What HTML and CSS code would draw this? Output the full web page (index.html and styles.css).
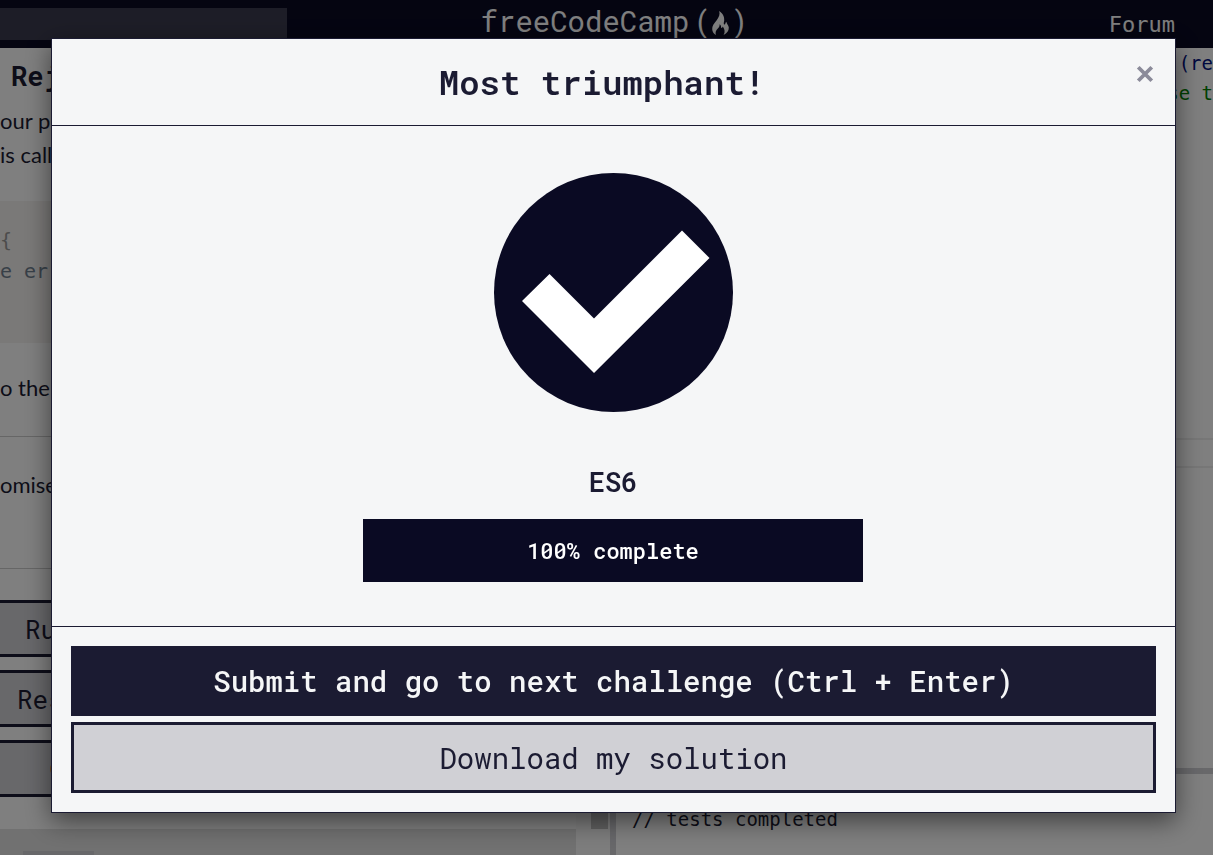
FILE: index.html
```html
<!DOCTYPE html>
<html lang="en">
<head>
<meta charset="utf-8">
<title>freeCodeCamp - ES6</title>
<link rel="stylesheet" href="styles.css">
</head>
<body>
<div class="app">
  <header class="topbar">
    <input class="search" type="text" aria-label="Search">
    <div class="logo">
      <span>freeCodeCamp</span><span class="paren open">(</span>
      <svg class="flame" viewBox="0 0 17 24" aria-hidden="true"><path d="M7.2 0C8.2 3.500 7 6 4.500 9.500 2 12.500 0 15 .2 18.200 .3 20.800 1.800 22.800 4 24 3 21.500 4 19.500 5.600 17.800 7 16.200 7.800 15 7.600 13.200 9 14.200 9.300 15.800 9 17 10.100 16.800 10.600 16.300 10.800 15.600 12.600 18 13.400 21 11.600 24 15 22.300 17 19.500 16.800 16.600 16.600 14.400 14.800 13 14.300 10.800 13.200 11.800 13.400 13.500 12.700 13.600 11.300 13.800 11.800 11.500 12.200 9.500 12.600 6 10.800 2.200 7.200 0Z"/></svg>
      <span class="paren">)</span>
    </div>
    <a class="forum" href="#">Forum</a>
  </header>
  <div class="workspace">
    <section class="lesson">
      <h1 class="lesson-title">Reject</h1>
      <p class="text">our promise<br>is called</p>
      <pre class="code"><span class="brace">{</span>
e error</pre>
      <p class="text task">o the</p>
      <p class="text hint">omise</p>
      <div class="tools">
        <button class="tool run">Run</button>
        <button class="tool reset">Reset</button>
        <button class="tool help" aria-label="Get help"><span class="dot"></span></button>
      </div>
      <div class="tests"><div class="test"></div></div>
    </section>
    <div class="track"><div class="thumb"></div></div>
    <section class="editor">
      <pre class="source"><span class="navy">((re</span>
<span class="green">se t</span></pre>
      <div class="band"></div>
      <pre class="console">// tests completed</pre>
    </section>
  </div>
</div>
<div class="backdrop">
  <div class="modal" role="dialog" aria-modal="true" aria-labelledby="modal-title">
    <div class="modal-header">
      <h2 class="modal-title" id="modal-title">Most triumphant!</h2>
      <button class="close" aria-label="Close"><svg viewBox="0 0 16 16"><path d="M2 2 14 14M14 2 2 14"/></svg></button>
    </div>
    <div class="modal-body">
      <svg class="check" viewBox="0 0 239 239" aria-hidden="true"><circle cx="119.500" cy="119.500" r="119.500"/><path d="M28 128 55.500 101 100 145.500 188 57.500 215.500 85 100 200Z"/></svg>
      <h3 class="block-name">ES6</h3>
      <div class="progress">100% complete</div>
    </div>
    <div class="modal-footer">
      <button class="btn primary">Submit and go to next challenge (Ctrl + Enter)</button>
      <button class="btn secondary">Download my solution</button>
    </div>
  </div>
</div>
</body>
</html>
```

FILE: styles.css
```css
* { box-sizing: border-box; }
body {
  margin: 0;
  overflow: hidden;
  color: #1b1b32;
  font-family: Lato, sans-serif;
}
h1, h2, h3, p, pre { margin: 0; }
button { font-family: "Roboto Mono", "Liberation Mono", monospace; color: #1b1b32; }

.app { height: 100vh; display: flex; flex-direction: column; background: #fff; }
.topbar {
  flex: none;
  height: 48px;
  display: grid;
  grid-template-columns: 1fr auto 1fr;
  align-items: center;
  padding-right: 38px;
  background: #0a0a23;
  font-family: "Roboto Mono", "Liberation Mono", monospace;
  color: #fff;
}
.search { width: 287px; height: 32px; border: 0; background: #3b3b4f; }
.logo {
  display: flex;
  align-items: center;
  height: 48px;
  padding: 0 0 6px 54px;
  font-size: 29px;
  line-height: 40px;
}
.paren { width: 18px; text-align: center; }
.open { margin-left: 4px; }
.flame { width: 17px; height: 24px; margin: 4px 1px 0; fill: #fff; }
.forum {
  justify-self: end;
  color: #fff;
  text-decoration: none;
  font-family: "DejaVu Sans Mono", monospace;
  font-size: 22px;
}

.workspace { flex: 1; min-height: 0; display: flex; }
.lesson { width: 576px; flex: none; overflow: hidden; display: flex; flex-direction: column; }
.lesson > * { flex-shrink: 0; }
.lesson-title {
  padding: 11px 0 11px 11px;
  font: bold 27px/34px "Roboto Mono", "Liberation Mono", monospace;
}
.text { font-size: 22px; line-height: 34px; }
.code {
  height: 142px;
  margin-top: 29px;
  padding-top: 24px;
  background: #f5f2f0;
  color: #708090;
  font: 20px/31px "DejaVu Sans Mono", monospace;
}
.brace { color: #999; }
.task { padding: 28px 0 31px; border-bottom: 1px solid #ccc; }
.hint { padding: 31px 0 66px; border-bottom: 1px solid #ccc; }
.tools { display: grid; gap: 13px; padding-top: 31px; }
.tool {
  height: 57px;
  border: 3px solid #1b1b32;
  border-left: 0;
  background: #d0d0d5;
  text-align: left;
  font-size: 26px;
}
.run { padding-left: 25px; }
.reset { padding-left: 17px; }
.help { padding-left: 50px; }
.dot { display: block; width: 18px; height: 18px; border-radius: 50%; background: #f1a03c; }
.tests { flex-grow: 1; margin-top: 32px; padding: 22px 0 0 23px; background: #e2e2e2; }
.test { width: 71px; height: 10px; background: #d0d0d5; }
.track { width: 34px; flex: none; display: flex; padding-left: 15px; background: #fafafa; }
.thumb { width: 17px; height: 781px; background: #c1c1c1; }
.editor { flex: 1; min-width: 0; display: flex; flex-direction: column; border-left: 6px solid #d0d0d5; }
.source {
  flex: none;
  height: 390px;
  text-align: right;
  font: 19px/30px "DejaVu Sans Mono", monospace;
}
.navy { color: #001080; }
.green { color: #008000; }
.band { flex: none; height: 30px; border: solid #eee; border-width: 2px 0; }
.console {
  flex: 1;
  margin-top: 300px;
  border-top: 6px solid #d0d0d5;
  padding: 31px 16px 0;
  font: 19px/28px "DejaVu Sans Mono", monospace;
}

.backdrop {
  position: fixed;
  inset: 0;
  padding: 38px 37px 0 51px;
  background: rgba(0, 0, 0, 0.5);
}
.modal {
  border: 1px solid #1b1b32;
  background: #f5f6f7;
  box-shadow: 0 8px 24px rgba(0, 0, 0, 0.5);
}
.modal-header {
  display: flex;
  align-items: flex-start;
  padding: 19px;
  border-bottom: 1px solid #1b1b32;
}
.modal-title {
  flex: 1;
  text-align: center;
  font: 600 34px/48px "Roboto Mono", "Liberation Mono", monospace;
}
.close { width: 23px; height: 32px; padding: 0 2px 0 3px; border: 0; background: none; }
.close svg { display: block; width: 18px; height: 18px; margin-top: -1px; fill: none; stroke: #8b8b9a; stroke-width: 3.4; }
.modal-body {
  display: flex;
  flex-direction: column;
  align-items: center;
  padding: 47px 20px 44px 19px;
}
.check { width: 239px; height: 239px; }
.check circle { fill: #0a0a23; }
.check path { fill: #fff; }
.block-name {
  margin: 52px 0 19px;
  font: 600 27px/36px "Roboto Mono", "Liberation Mono", monospace;
}
.progress {
  width: 500px;
  max-width: 100%;
  padding: 16px;
  background: #0a0a23;
  color: #fff;
  text-align: center;
  font: 500 22px/31px "Roboto Mono", "Liberation Mono", monospace;
}
.modal-footer {
  display: grid;
  gap: 6px;
  padding: 19px;
  border-top: 1px solid #1b1b32;
}
.btn {
  padding: 14px;
  border: 3px solid #1b1b32;
  font-size: 29px;
  line-height: 36px;
}
.primary { background: #1b1b32; color: #f5f6f7; font-weight: 500; }
.secondary { padding: 15px 14px 13px; background: #d0d0d5; line-height: 37px; }
```
